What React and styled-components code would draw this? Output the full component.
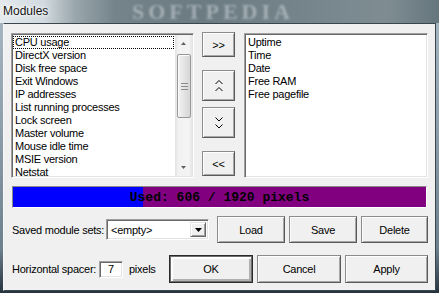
import React from "react";
import styled, { createGlobalStyle } from "styled-components";

// ========================================
// DATA
// ========================================

const available = [
  "CPU usage",
  "DirectX version",
  "Disk free space",
  "Exit Windows",
  "IP addresses",
  "List running processes",
  "Lock screen",
  "Master volume",
  "Mouse idle time",
  "MSIE version",
  "Netstat",
];

const active = ["Uptime", "Time", "Date", "Free RAM", "Free pagefile"];

const used = 606;
const total = 1920;

// ========================================
// ICONS
// ========================================

const Chevrons = ({ down }) => (
  <svg width="8" height="12" viewBox="0 0 8 12">
    <g fill="none" stroke="#000" strokeWidth="1">
      {down ? (
        <>
          <polyline points="0.5,0.5 4,4 7.5,0.5" />
          <polyline points="0.5,7.5 4,11 7.5,7.5" />
        </>
      ) : (
        <>
          <polyline points="0.5,4 4,0.5 7.5,4" />
          <polyline points="0.5,11 4,7.5 7.5,11" />
        </>
      )}
    </g>
  </svg>
);

const Triangle = ({ down, color = "#606060", w = 7 }) => {
  const h = Math.ceil(w / 2);
  return (
    <svg width={w} height={h} viewBox={`0 0 ${w} ${h}`}>
      <polygon
        fill={color}
        points={down ? `0,0 ${w},0 ${w / 2},${h}` : `0,${h} ${w},${h} ${w / 2},0`}
      />
    </svg>
  );
};

// ========================================
// APP
// ========================================

const App = () => {
  return (
    <Window>
      <GlobalStyle />
      <TitleBar>
        <TitleText>Modules</TitleText>
        <Watermark>SOFTPEDIA</Watermark>
      </TitleBar>
      <Client>
        <ListRow>
          <ListBox $width={183}>
            <Items>
              {available.map((name, i) => (
                <Item key={name} $focus={i === 0}>
                  {name}
                </Item>
              ))}
            </Items>
            <ScrollBar>
              <ScrollArrow>
                <Triangle w={5} />
              </ScrollArrow>
              <ScrollSpace>
                <Thumb>
                  <Grip />
                </Thumb>
              </ScrollSpace>
              <ScrollArrow>
                <Triangle down w={5} />
              </ScrollArrow>
            </ScrollBar>
          </ListBox>

          <MoveColumn>
            <Button $w={33} $h={25}>&gt;&gt;</Button>
            <Button $w={33} $h={31} $mt={13}>
              <Chevrons />
            </Button>
            <Button $w={33} $h={31} $mt={6}>
              <Chevrons down />
            </Button>
            <Button $w={33} $h={25} $mt={13}>&lt;&lt;</Button>
          </MoveColumn>

          <ListBox $grow>
            <Items>
              {active.map(name => (
                <Item key={name}>{name}</Item>
              ))}
            </Items>
          </ListBox>
        </ListRow>

        <UsageBar>
          <UsageFill style={{ width: `${(used / total) * 100}%` }} />
          <UsageText>
            Used: {used} / {total} pixels
          </UsageText>
        </UsageBar>

        <FormRow $mt={8} $h={27}>
          <FieldLabel $w={95}>Saved module sets:</FieldLabel>
          <Combo>
            <ComboText>&lt;empty&gt;</ComboText>
            <ComboButton>
              <Triangle down color="#000" w={7} />
            </ComboButton>
          </Combo>
          <ButtonGroup>
            <Button $w={68} $h={27}>Load</Button>
            <Button $w={68} $h={27}>Save</Button>
            <Button $w={67} $h={27}>Delete</Button>
          </ButtonGroup>
        </FormRow>

        <FormRow $mt={12} $h={28}>
          <FieldLabel $w={88}>Horizontal spacer:</FieldLabel>
          <SmallInput>7</SmallInput>
          <Unit>pixels</Unit>
          <ButtonGroup>
            <Button $w={84} $h={28} $default>OK</Button>
            <Button $w={84} $h={28}>Cancel</Button>
            <Button $w={83} $h={28}>Apply</Button>
          </ButtonGroup>
        </FormRow>
      </Client>
    </Window>
  );
};

export default App;

// ========================================
// STYLES
// ========================================

const GlobalStyle = createGlobalStyle`
  html, body {
    margin: 0;
    padding: 0;
    background: #6d7f8c;
  }
  body {
    font-family: "Liberation Sans", Arial, sans-serif;
    font-size: 11px;
    letter-spacing: -0.25px;
    color: #000;
  }
  * {
    box-sizing: border-box;
  }
`;

const Window = styled.div`
  width: 439px;
  height: 293px;
  display: flex;
  flex-direction: column;
  overflow: hidden;
  background: linear-gradient(
    to bottom,
    #a9b9c4 0%,
    #8fa1ad 40%,
    #6d808e 85%,
    #26323e 100%
  );
`;

const TitleBar = styled.div`
  position: relative;
  flex: none;
  height: 23px;
  display: flex;
  align-items: center;
  padding: 0 0 1px 3px;
  overflow: hidden;
  background: linear-gradient(
    90deg,
    #e4eaee 0%,
    #d2dadf 10%,
    #9aa7ad 17%,
    #75848b 26%,
    #6c7b82 45%,
    #76858c 70%,
    #7f8d93 88%,
    #66767d 100%
  );
`;

const TitleText = styled.span`
  position: relative;
  z-index: 1;
  font-family: "Liberation Sans", Arial, sans-serif;
  font-size: 12px;
  letter-spacing: 0;
  color: #141414;
  text-shadow: 0 0 6px #fff, 0 0 3px #fff;
`;

const Watermark = styled.span`
  position: absolute;
  left: 132px;
  top: 1px;
  line-height: 21px;
  font-family: "Liberation Serif", serif;
  font-weight: bold;
  font-size: 22px;
  letter-spacing: 4px;
  color: rgba(205, 214, 219, 0.55);
  filter: blur(1.2px);
`;

const Client = styled.div`
  flex: 1;
  margin: 0 3px 2px 3px;
  padding: 9px 7px 0 7px;
  background: #f0f0f0;
  border: 1px solid #3a464e;
  border-left-color: #f8f8f8;
`;

const ListRow = styled.div`
  display: flex;
  height: 145px;
`;

const ListBox = styled.div`
  display: flex;
  width: ${p => (p.$width ? `${p.$width}px` : "auto")};
  flex: ${p => (p.$grow ? 1 : "none")};
  margin-left: ${p => (p.$grow ? 9 : 0)}px;
  background: #fff;
  border: 1px solid;
  border-color: #a0a0a0 #fff #fff #a0a0a0;
  box-shadow: inset 1px 1px 0 #696969, inset -1px -1px 0 #e3e3e3;
`;

const Items = styled.div`
  flex: 1;
  padding: 2px 1px 0 1px;
  overflow: hidden;
`;

const Item = styled.div`
  height: 13px;
  line-height: 13px;
  padding-left: 2px;
  white-space: nowrap;
  outline: ${p => (p.$focus ? "1px dotted #000" : "none")};
  outline-offset: -1px;
`;

const ScrollBar = styled.div`
  flex: none;
  width: 17px;
  margin: 1px 1px 1px 0;
  display: flex;
  flex-direction: column;
  background: linear-gradient(
    90deg,
    #e2e2e2 0%,
    #f2f2f2 20%,
    #f4f4f4 80%,
    #e6e6e6 100%
  );
`;

const ScrollArrow = styled.div`
  flex: none;
  height: 17px;
  display: flex;
  align-items: center;
  justify-content: center;
`;

const ScrollSpace = styled.div`
  flex: 1;
  padding: 2px 1px 0 2px;
`;

const Thumb = styled.div`
  height: 64px;
  display: flex;
  align-items: center;
  justify-content: center;
  border: 1px solid #989898;
  border-radius: 2px;
  background: linear-gradient(90deg, #f2f2f2 0%, #e4e4e4 50%, #d6d6d6 100%);
  box-shadow: inset 1px 1px 0 #fbfbfb;
`;

const Grip = styled.div`
  width: 7px;
  height: 7px;
  background: repeating-linear-gradient(
    to bottom,
    #8c8c8c 0,
    #8c8c8c 1px,
    transparent 1px,
    transparent 3px
  );
`;

const MoveColumn = styled.div`
  flex: none;
  display: flex;
  flex-direction: column;
  margin-left: 8px;
  margin-top: -1px;
`;

const Button = styled.button`
  flex: none;
  width: ${p => p.$w}px;
  height: ${p => p.$h}px;
  margin-top: ${p => p.$mt || 0}px;
  padding: 0;
  display: flex;
  align-items: center;
  justify-content: center;
  font-family: "Liberation Sans", Arial, sans-serif;
  font-size: 11px;
  letter-spacing: -0.25px;
  color: #000;
  background: #f0f0f0;
  border: 1px solid;
  border-color: ${p => (p.$default ? "#2a2a2a" : "#8c8c8c #5a5a5a #5a5a5a #8c8c8c")};
  box-shadow: ${p =>
    p.$default
      ? "inset 0 0 0 1px #6e6e6e, inset 1px 1px 0 2px #fdfdfd, inset -1px -1px 0 2px #b0b0b0"
      : "inset 1px 1px 0 #fdfdfd, inset -1px -1px 0 #a8a8a8"};
`;

const UsageBar = styled.div`
  position: relative;
  height: 22px;
  margin: 8px 1px 0 1px;
  display: flex;
  background: #800080;
  border: 1px solid;
  border-color: #8a8a8a #fff #fff #8a8a8a;
`;

const UsageFill = styled.div`
  height: 100%;
  background: #0000ff;
`;

const UsageText = styled.div`
  position: absolute;
  inset: 0;
  display: flex;
  align-items: center;
  justify-content: center;
  font-family: "Liberation Mono", "Courier New", monospace;
  font-weight: bold;
  font-size: 13px;
  letter-spacing: 0;
  color: #000;
`;

const FormRow = styled.div`
  display: flex;
  align-items: center;
  height: ${p => p.$h}px;
  margin-top: ${p => p.$mt}px;
`;

const FieldLabel = styled.span`
  flex: none;
  width: ${p => p.$w}px;
  padding-left: 1px;
  white-space: nowrap;
`;

const Combo = styled.div`
  flex: none;
  width: 103px;
  height: 21px;
  display: flex;
  align-items: center;
  background: #fff;
  border: 1px solid;
  border-color: #a0a0a0 #fff #fff #a0a0a0;
  box-shadow: inset 1px 1px 0 #696969, inset -1px -1px 0 #e3e3e3;
  padding: 2px;
`;

const ComboText = styled.span`
  flex: 1;
  padding-left: 2px;
`;

const ComboButton = styled.div`
  flex: none;
  width: 16px;
  height: 100%;
  display: flex;
  align-items: center;
  justify-content: center;
  background: #f0f0f0;
  border: 1px solid;
  border-color: #e3e3e3 #696969 #696969 #e3e3e3;
  box-shadow: inset 1px 1px 0 #fff, inset -1px -1px 0 #a0a0a0;
`;

const SmallInput = styled.div`
  flex: none;
  width: 24px;
  height: 17px;
  display: flex;
  align-items: center;
  justify-content: center;
  background: #fff;
  border: 1px solid;
  border-color: #a0a0a0 #fff #fff #a0a0a0;
  box-shadow: inset 1px 1px 0 #696969, inset -1px -1px 0 #e3e3e3;
`;

const Unit = styled.span`
  margin-left: 6px;
`;

const ButtonGroup = styled.div`
  display: flex;
  gap: 4px;
  margin-left: auto;
`;
